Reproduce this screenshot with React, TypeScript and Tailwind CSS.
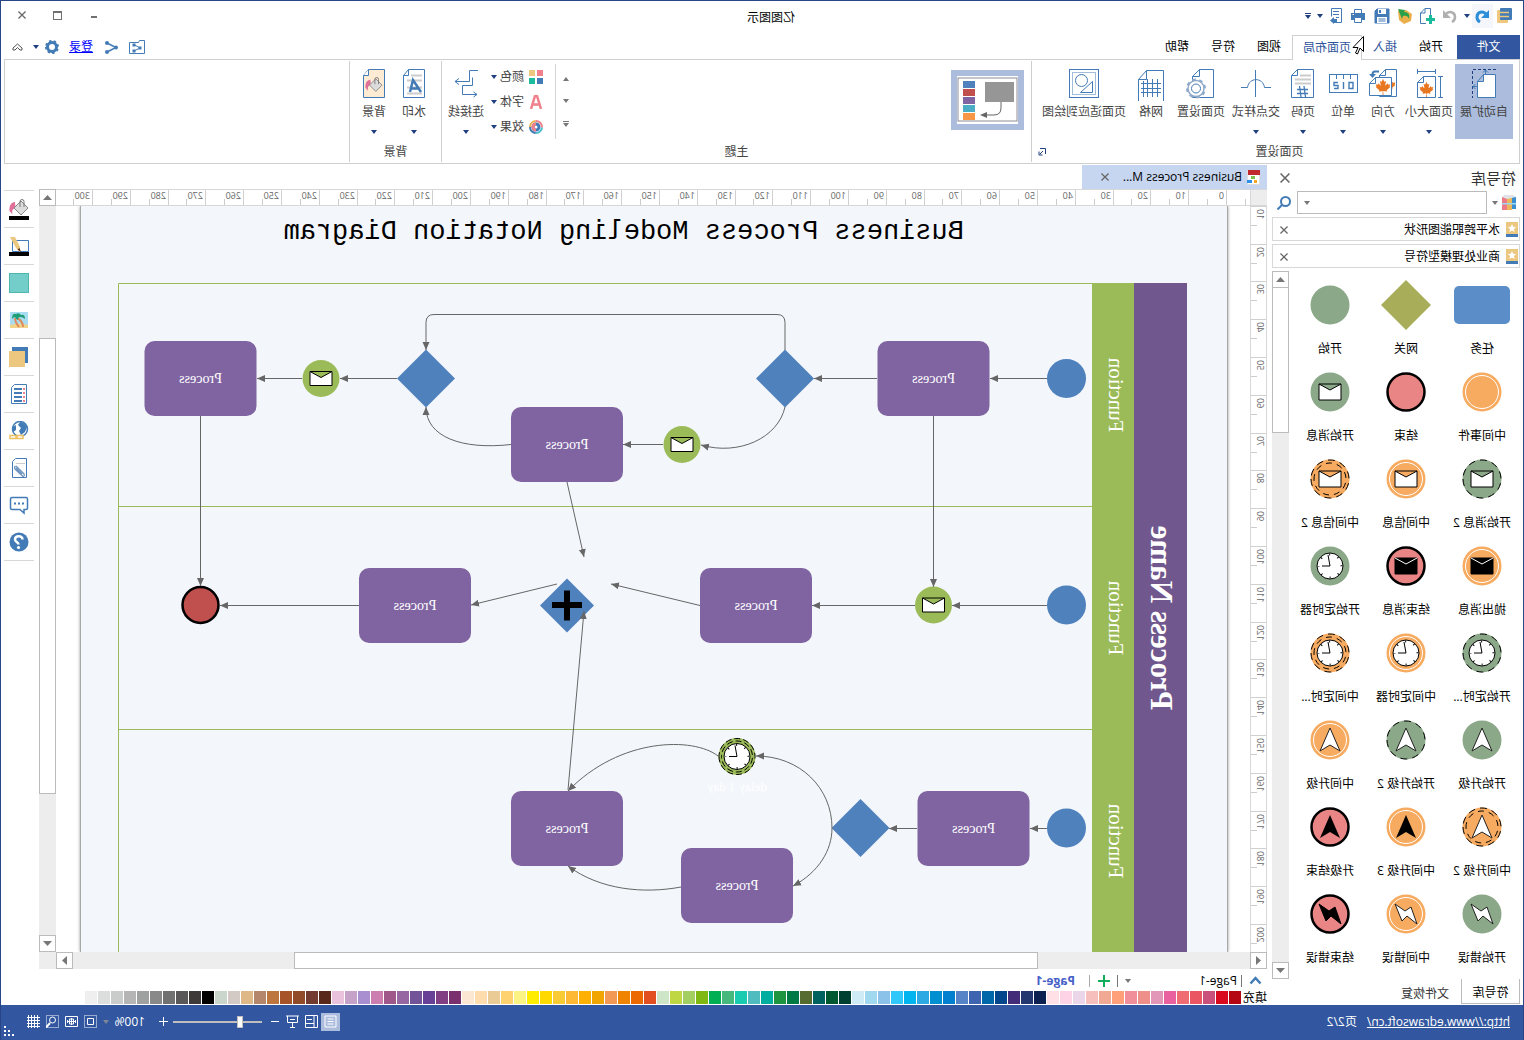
import type { ReactNode } from 'react';
import { FaCanadianMapleLeaf } from 'react-icons/fa';

const symbols: { label: string; ring: string; glyph?: string }[] = [
  { label: '任务', ring: 'task' },
  { label: '网关', ring: 'gateway' },
  { label: '开始', ring: 'start' },
  { label: '中间事件', ring: 'middle' },
  { label: '结束', ring: 'end' },
  { label: '开始消息', ring: 'start', glyph: 'mail' },
  { label: '开始消息 2', ring: 'start2', glyph: 'mail' },
  { label: '中间信息', ring: 'middle', glyph: 'mail' },
  { label: '中间信息 2', ring: 'middle2', glyph: 'mail' },
  { label: '抛出消息', ring: 'middle', glyph: 'mailDark' },
  { label: '结束消息', ring: 'end', glyph: 'mailDark' },
  { label: '开始定时器', ring: 'start', glyph: 'clock' },
  { label: '开始定时...', ring: 'start2', glyph: 'clock' },
  { label: '中间定时器', ring: 'middle', glyph: 'clock' },
  { label: '中间定时...', ring: 'middle2', glyph: 'clock' },
  { label: '开始升级', ring: 'start', glyph: 'up' },
  { label: '开始升级 2', ring: 'start2', glyph: 'up' },
  { label: '中间升级', ring: 'middle', glyph: 'up' },
  { label: '中间升级 2', ring: 'middle2', glyph: 'up' },
  { label: '中间升级 3', ring: 'middle', glyph: 'upDark' },
  { label: '升级结束', ring: 'end', glyph: 'upDark' },
  { label: '开始错误', ring: 'start', glyph: 'bolt' },
  { label: '中间错误', ring: 'middle', glyph: 'bolt' },
  { label: '结束错误', ring: 'end', glyph: 'boltDark' },
];

const palette = [
  '#b50614', '#d90a1e', '#c9507b', '#ea5662', '#ee6c72', '#e9619f', '#e296b8', '#ef8f8a', '#f08f99', '#ffa07a',
  '#f2a994', '#f6bfbb', '#ead5e9', '#ffd3e6', '#ffe0e6', '#0d2150', '#22386f', '#432d78', '#04468b', '#0068a8',
  '#3e63b0', '#5684c6', '#0080cf', '#008fd0', '#2ca8e2', '#00b4f0', '#30c8fb', '#8ac2ea', '#a0d8ef', '#cfebf5',
  '#004030', '#005830', '#00625e', '#556b2f', '#007a45', '#1f9440', '#00ae9f', '#50bcc0', '#1acbb1', '#48b97c',
  '#00ae54', '#80b813', '#a3cf62', '#bed742', '#cde6c7', '#e24f20', '#ec6800', '#f08300', '#f29a55', '#f0a500',
  '#ffb000', '#fdb933', '#f8ca33', '#ffd900', '#ffec00', '#fbf384', '#fed26e', '#eacb96', '#fedcae', '#fce8d2',
  '#7a306e', '#823e83', '#684096', '#735499', '#9667a0', '#9f5889', '#cc7eb1', '#a98fcf', '#c6a2c8', '#eac2dc',
  '#58281a', '#733a2f', '#924b29', '#a75428', '#be763f', '#b4866b', '#deb887', '#d3cac5', '#cad5cc', '#000000',
  '#3e3a39', '#595757', '#727171', '#898989', '#9fa0a0', '#b5b5b6', '#cacccc', '#dcdddd', '#efefef',
];

const BLUE = '#427bb5';
const NAVY = '#1f3f7f';
const ORANGE = '#e87722';

/* ---------- small shared pieces ---------- */

function Caret({ color = NAVY, up = false }: { color?: string; up?: boolean }) {
  return (
    <svg width="6" height="4" viewBox="0 0 6 4" className="shrink-0">
      <path d={up ? 'M0 4h6L3 0z' : 'M0 0h6L3 4z'} fill={color} />
    </svg>
  );
}

function Cross({ size = 9 }: { size?: number }) {
  return (
    <svg width={size} height={size} viewBox="0 0 9 9" fill="none" stroke="#666" strokeWidth="1.4">
      <path d="M.5.5l8 8M8.5.5l-8 8" />
    </svg>
  );
}

function Icon({ w = 16, h = 16, children }: { w?: number; h?: number; children: ReactNode }) {
  return (
    <svg width={w} height={h} viewBox={`0 0 ${w} ${h}`} fill="none" stroke={BLUE} className="shrink-0">
      {children}
    </svg>
  );
}

function Bucket() {
  return (
    <>
      <path d="M14 3c4 0 6 4 5.500 9l-3 3.500c1-4-.5-6-3-6.500z" fill="#e0709a" stroke="none" />
      <path d="M1 9l7-7 7 7-7 7z" fill="#dcdcdc" stroke="#888" />
      <path d="M5 8V2.500a2 2 0 0 1 4 0V8" stroke="#777" />
    </>
  );
}

/* ---------- title bar ---------- */

function QuickAccess() {
  const btn = 'flex h-6 items-center justify-center';
  return (
    <div className="flex w-[222px] items-center pb-1 pl-[7px]">
      <button className={`${btn} w-[23px]`} aria-label="Edraw">
        <Icon>
          <rect x="4" y="2" width="11" height="13" rx="1" fill="#efc77e" stroke="none" />
          <rect x="0" y="0" width="12" height="12" rx="1" fill={BLUE} stroke="none" />
          <path d="M3 4.500h9M3 8.500h9" stroke="#efc77e" strokeWidth="1.5" />
        </Icon>
      </button>
      <button className={`${btn} w-[21px] bg-[#f4f6fb]`} aria-label="撤销">
        <Icon w={14} h={14}>
          <path d="M2 6C6 1 12 3 12 8c0 2-1 4-3 5" stroke="#2d8fd8" strokeWidth="3" />
          <path d="M0 1v8h8z" fill="#2d8fd8" stroke="none" />
        </Icon>
      </button>
      <button className={`${btn} w-[10px]`} aria-label="撤销列表"><Caret /></button>
      <button className={`${btn} w-6`} aria-label="重做">
        <Icon w={14} h={14}>
          <path d="M12 6C8 1 2 3 2 8c0 2 1 4 3 5" stroke="#b0b0b0" strokeWidth="2.500" />
          <path d="M14 1v8H6z" fill="#b0b0b0" stroke="none" />
        </Icon>
      </button>
      <button className={`${btn} w-[22px]`} aria-label="新建">
        <Icon>
          <path d="M9 15.500h5.500V5L10 .500H4.500V8M10 .500V5h4.500" />
          <path d="M4.500 7v9M0 11.500h9" stroke="#1abc9c" strokeWidth="3" />
        </Icon>
      </button>
      <button className={`${btn} w-[22px]`} aria-label="打开">
        <Icon>
          <path d="M1 6l6-4 8 1-1 9-5 4-7-3z" fill="#e9b04c" stroke="none" />
          <path d="M15 1L8 2l1 2c-4 0-6 2-5 7 1-3 3-4 6-3l1 3z" fill="#2aa04a" stroke="none" />
        </Icon>
      </button>
      <button className={`${btn} w-6`} aria-label="保存">
        <Icon>
          <path d="M1 1h12l2 2v12H1z" fill={BLUE} />
          <path d="M4 1v5h8V1zM3 9h10v6H3z" fill="#fff" stroke="none" />
          <path d="M4.500 11h7M4.500 13h7" />
          <path d="M9 2h2v3H9z" fill={BLUE} stroke="none" />
        </Icon>
      </button>
      <button className={`${btn} w-[23px]`} aria-label="打印">
        <Icon>
          <path d="M1 5h14v7H1z" fill={BLUE} stroke="none" />
          <path d="M4.500 5V1.500h7V5M4.500 9.500h7v5h-7z" fill="#fff" />
          <path d="M12 6.500h1.500" stroke="#fff" />
        </Icon>
      </button>
      <button className={`${btn} w-[22px]`} aria-label="导出">
        <Icon w={12} h={16}>
          <path d="M8 14.500H.5V.5h10v8M3 3.500h6M3 6.500h6M3 9.500h3" />
          <path d="M5 11h3V9l4 3.500L8 16v-2H5z" fill={BLUE} stroke="none" />
        </Icon>
      </button>
      <button className={`${btn} w-[10px]`} aria-label="更多导出"><Caret /></button>
      <button className={`${btn} w-[14px] flex-col gap-px`} aria-label="自定义">
        <span className="h-px w-1.5 bg-[#1f3f7f]" />
        <Caret />
      </button>
    </div>
  );
}

function TitleBar() {
  return (
    <header className="flex h-[34px] shrink-0 items-center">
      <QuickAccess />
      <h1 className="flex-1 text-center text-black">亿图图示</h1>
      <div className="flex w-[240px] justify-end pb-1.5 pr-[3px] text-[#666]">
        <button className="flex h-7 w-9 items-center justify-center" aria-label="最小化">
          <span className="mt-1 h-0.5 w-1.5 bg-[#707070]" />
        </button>
        <button className="flex h-7 w-9 items-center justify-center" aria-label="最大化">
          <span className="h-[9px] w-[9px] border border-t-2 border-[#707070]" />
        </button>
        <button className="flex h-7 w-9 items-center justify-center" aria-label="关闭"><Cross size={8} /></button>
      </div>
    </header>
  );
}

function TabRow() {
  const tab = 'h-6 px-[11px] text-black';
  return (
    <nav className="relative flex h-6 shrink-0 items-center px-[3px]">
      <button className="mr-[3px] h-6 w-[63px] bg-[#3257a0] text-white">文件</button>
      <button className={tab}>开始</button>
      <button className="h-6 px-[11px] text-[#2f549b]">插入</button>
      <button className="relative z-10 -mb-px h-[25px] border border-b-0 border-[#cfcfcf] bg-white px-[10px] text-[#2f549b]">页面布局</button>
      <button className={tab}>视图</button>
      <button className={tab}>符号</button>
      <button className={tab}>帮助</button>
      <div className="ml-auto flex items-center pr-2">
        <button className="mr-2.5" aria-label="分享文件夹">
          <Icon w={17} h={15}>
            <path d="M.5 13.500V.5h5l1 2h9v11z" />
            <path d="M11 4.500L5 8l6 3" />
            <path d="M9.500 3.500h3v3h-3zM3.500 6.500h3v3h-3zM9.500 9.500h3v3h-3z" fill={BLUE} stroke="none" />
          </Icon>
        </button>
        <button className="mr-3" aria-label="分享">
          <Icon w={13} h={13}>
            <path d="M11 2L2 6.500l9 4.500" strokeWidth="1.500" />
            <circle cx="11" cy="2" r="2" fill={BLUE} stroke="none" />
            <circle cx="2" cy="6.500" r="2" fill={BLUE} stroke="none" />
            <circle cx="11" cy="11" r="2" fill={BLUE} stroke="none" />
          </Icon>
        </button>
        <a href="#login" className="mr-2.5 text-[#0000ff] underline">登录</a>
        <button className="mr-1.5" aria-label="设置">
          <Icon w={14} h={14}>
            <circle cx="7" cy="7" r="4.500" strokeWidth="3" />
            <circle cx="7" cy="7" r="6" strokeWidth="2" strokeDasharray="2.350 2.350" />
          </Icon>
        </button>
        <button className="mr-2.5" aria-label="设置菜单"><Caret /></button>
        <button aria-label="折叠功能区">
          <Icon w={11} h={9}>
            <path d="M1 5l4.500-4L10 5v2H8L5.500 4.500 3 7H1z" stroke="#555" />
          </Icon>
        </button>
      </div>
      {/* mouse pointer */}
      <svg width="13" height="20" viewBox="0 0 13 20" className="absolute left-[159px] top-px z-20">
        <path d="M.5.500v15l3.500-3.500 2.500 6 2-1-2.500-5.500h5z" fill="#fff" stroke="#000" />
      </svg>
    </nav>
  );
}

/* ---------- ribbon ---------- */

function RibbonButton({ label, width, icon, menu = false, active = false }: {
  label: string; width: string; icon: ReactNode; menu?: boolean; active?: boolean;
}) {
  return (
    <button className={`flex h-[75px] shrink-0 flex-col items-center pt-[5px] whitespace-nowrap text-[#444] ${width} ${active ? 'bg-[#abbcdd]' : ''}`}>
      <Icon w={30} h={32}>{icon}</Icon>
      <span className="mt-[3px] leading-4">{label}</span>
      {menu && <span className="mt-2.5"><Caret /></span>}
    </button>
  );
}

function RibbonGroup({ label, className = '', launcher = false, children }: {
  label: string; className?: string; launcher?: boolean; children: ReactNode;
}) {
  return (
    <section className={`my-px flex flex-col border-r border-[#cfcfcf] pt-[3px] ${className}`}>
      <div className="flex flex-1">{children}</div>
      <div className="flex h-[21px] items-center">
        <span className="flex-1 text-center text-[#444]">{label}</span>
        {launcher && (
          <button className="mr-1.5" aria-label="更多设置">
            <Icon w={8} h={8}>
              <path d="M.5 6V.5H6M3 3l3 3M7 3.500V7H3.500" stroke={NAVY} />
            </Icon>
          </button>
        )}
      </div>
    </section>
  );
}

const pageSetup = [
  {
    label: '自动扩展', width: 'w-[58px]', active: true,
    icon: (
      <>
        <path d="M3.500 5.500h12l6 7v16h-18zM15.500 5.500v7h6" fill="#fff" />
        <path d="M3 .5h23.500V29" strokeDasharray="3 2" stroke={NAVY} />
        <path d="M13.500 6V1M11 3.500L13.500 1 16 3.500M21 17.500h5M23.500 15l2.500 2.500-2.500 2.500" />
      </>
    ),
  },
  {
    label: '页面大小', width: 'w-[52px]', menu: true,
    icon: (
      <>
        <path d="M8.500 7.500h12l6 6v15h-18zM20.500 7.500v6h6M8.500 2.500h18M8.500 0v5M26.500 0v5M3.500 7.500v21M1 7.500h5M1 28.500h5" />
        <FaCanadianMapleLeaf x="10" y="13" size={15} color={ORANGE} />
      </>
    ),
  },
  {
    label: '方向', width: 'w-10', menu: true,
    icon: (
      <>
        <path d="M1.500.500h11l6 6v21h-17zM12.500.500v6h6" />
        <FaCanadianMapleLeaf x="2" y="9" size={14} color={ORANGE} />
        <path d="M6.500 8.500h16l6 6v12h-22z" fill="#fff" />
        <path d="M22.500 8.500v6h6" />
        <FaCanadianMapleLeaf x="7" y="10" size={16} color={ORANGE} />
        <path d="M19 2.500h4q2.500 0 2.500 3" strokeWidth="2" />
        <path d="M22 5h7l-3.500 4z" fill={BLUE} stroke="none" />
      </>
    ),
  },
  {
    label: '单位', width: 'w-10', menu: true,
    icon: (
      <>
        <rect x=".5" y="5.500" width="28" height="18" />
        <path d="M7.500 6v4M14.500 6v4M21.500 6v4" />
        <path d="M5 13.500h4v6H5zM14.500 13v7M20 13.500h4v3h-4v3h4" strokeWidth="1.400" />
      </>
    ),
  },
  {
    label: '页码', width: 'w-10', menu: true,
    icon: (
      <>
        <path d="M4.500.500h16l6 6v22h-22zM20.500.500v6h6" />
        <path d="M7 6.500h11M7 10.500h16M7 14.500h16" stroke="#ccc" strokeWidth="2" />
        <path d="M10 20.500h11M10 24.500h11M14 17l-1.500 11M18.500 17l-1.500 11" strokeWidth="1.300" />
      </>
    ),
  },
  {
    label: '交点样式', width: 'w-[54px]', menu: true,
    icon: <path d="M0 18.500h6.500C8 8 22 8 23.500 18.500H31M15.500 1v27" />,
  },
  {
    label: '页面设置', width: 'w-[56px]',
    icon: (
      <>
        <path d="M2.500.500h14l7 7v21h-21zM16.500.500v7h7" />
        <circle cx="20" cy="19.500" r="8" fill="#fff" stroke="#8fa9c8" strokeWidth="1.500" />
        <circle cx="20" cy="19.500" r="9" stroke="#8fa9c8" strokeWidth="2" strokeDasharray="3.530 3.530" />
        <circle cx="20" cy="19.500" r="4.500" fill="#fff" />
      </>
    ),
  },
  {
    label: '网格', width: 'w-11',
    icon: (
      <>
        <path d="M2.500 1.500h17l8 9v24h-25zM19.500 1.500v9h8" />
        <path d="M5 14.500h20M5 19.500h20M5 23.500h20M8.500 10v18M13.500 10v18M18.500 10v18M22.500 12v16" />
      </>
    ),
  },
  {
    label: '页面适应到绘图', width: 'w-[90px]',
    icon: (
      <>
        <rect x=".500" y=".500" width="29" height="28" />
        <rect x="3.500" y="3.500" width="23" height="22" strokeDasharray="1 1" />
        <circle cx="17.500" cy="11.500" r="6" />
        <path d="M6.500 12.500v11h12z" />
      </>
    ),
  },
];

function Ribbon() {
  const small = 'flex h-[25px] items-center text-[#444]';
  return (
    <div className="mx-[3px] flex h-[105px] shrink-0 border border-[#cfcfcf]">
      <RibbonGroup label="页面设置" className="pl-1.5" launcher>
        {pageSetup.map((b) => <RibbonButton key={b.label} {...b} />)}
        <span className="w-[7px]" />
      </RibbonGroup>

      <RibbonGroup label="主题" className="w-[590px]">
        <button className="ml-[7px] mt-1.5 h-[60px] w-[73px] bg-[#abbcdd] p-1.5" aria-label="主题样式">
          <svg width="61" height="48" viewBox="0 0 61 48" className="bg-white">
            <rect x="1" y="2" width="59" height="43" fill="#fff" stroke="#8c8c94" />
            <rect x="4" y="6" width="29" height="20" fill="#969696" />
            <path d="M17 26v6q0 7 7 7h8" fill="none" stroke="#666" />
            <path d="M31 36l7 3-7 3z" fill="#666" />
            <path d="M43 5h12v7H43z" fill="#4f81bd" />
            <path d="M43 13h12v7H43z" fill="#c0504d" />
            <path d="M43 21h12v7H43z" fill="#8064a2" />
            <path d="M43 29h12v7H43z" fill="#4bacc6" />
            <path d="M43 37h12v7H43z" fill="#f79646" />
          </svg>
        </button>
        <div className="ml-auto flex h-[75px] w-[21px] flex-col items-center gap-[18px] border-r border-[#d5d5d5] pt-[13px]">
          <button aria-label="上一行"><Caret up color="#777" /></button>
          <button aria-label="下一行"><Caret color="#777" /></button>
          <button className="flex flex-col gap-px" aria-label="展开">
            <span className="h-px w-1.5 bg-[#777]" />
            <Caret color="#777" />
          </button>
        </div>
        <div className="ml-3 flex w-[55px] flex-col">
          <button className={small}>
            <Icon w={14} h={14}>
              <g stroke="none">
                <path d="M0 0h6v6H0z" fill="#f0808c" />
                <path d="M8 0h6v6H8z" fill="#ecc77f" />
                <path d="M0 8h6v6H0z" fill={BLUE} />
                <path d="M8 8h6v6H8z" fill="#1abc9c" />
              </g>
            </Icon>
            <span className="ml-[5px] mr-[3px]">颜色</span>
            <Caret />
          </button>
          <button className={small}>
            <Icon w={14} h={14}>
              <path d="M2 14L6 1h2l4 13M4 9.500h6" stroke="#f0808c" strokeWidth="2.500" />
            </Icon>
            <span className="ml-[5px] mr-[3px]">字体</span>
            <Caret />
          </button>
          <button className={small}>
            <Icon w={14} h={14}>
              <circle cx="7" cy="7" r="6" stroke={BLUE} strokeWidth="2" strokeDasharray="9 28.700" />
              <circle cx="7" cy="7" r="6" stroke="#4bc0d0" strokeWidth="2" strokeDasharray="9 28.700" strokeDashoffset="-9" />
              <circle cx="7" cy="7" r="6" stroke="#f0808c" strokeWidth="2" strokeDasharray="10 27.700" strokeDashoffset="-18" />
              <circle cx="7" cy="7" r="6" stroke="#ecb04f" strokeWidth="2" strokeDasharray="9.700 28" strokeDashoffset="-28" />
              <circle cx="7" cy="7" r="3" strokeWidth="3" />
              <path d="M7 4a3 3 0 0 1 0 6" stroke="#f0808c" strokeWidth="3" />
            </Icon>
            <span className="ml-[5px] mr-[3px]">效果</span>
            <Caret />
          </button>
        </div>
        <RibbonButton
          label="连接线" width="w-11" menu
          icon={<path d="M4 1.500h8.500v11H27M23 9.500l4 3-4 3M9.500 8.500v8h10v9H5M8.500 23L5 25.500 8.500 28" transform="matrix(1 0 0 1 -1 0)" />}
        />
        <span className="w-0.5" />
      </RibbonGroup>

      <RibbonGroup label="背景" className="w-[92px]">
        <span className="w-[7px]" />
        <RibbonButton
          label="水印" width="w-10" menu
          icon={
            <>
              <path d="M4.500.500h16l5 6v22h-21zM20.500.500v6h5" />
              <path d="M7 6.500h11M7 11.500h15M7 18.500h15M7 24.500h15" stroke="#ccc" strokeWidth="2" />
              <path d="M8 23l8-12 3 12M11 19.500h8" strokeWidth="2.500" />
            </>
          }
        />
        <RibbonButton
          label="背景" width="w-10" menu
          icon={
            <>
              <path d="M4.500.500h16l5 6v22h-21z" fill="#fdebd3" />
              <path d="M20.500.500v6h5" fill="#fff" />
              <g transform="translate(6 8) scale(.9)"><Bucket /></g>
            </>
          }
        />
      </RibbonGroup>
    </div>
  );
}

/* ---------- symbols ---------- */

const GLYPH_UP = 'M0-12L10 11 0 5-10 11z';
const GLYPH_BOLT = 'M11-10L1-3-5-7-11 10-1 2 4 7z';

function Glyph({ name }: { name?: string }) {
  switch (name) {
    case 'mail':
      return <path d="M-11-8h22V8h-22zM-11-8L0-2 11-8" fill="#fff" stroke="#000" />;
    case 'mailDark':
      return (
        <>
          <path d="M-11-8h22V8h-22z" fill="#000" stroke="#000" />
          <path d="M-11-8L0-2 11-8" fill="none" stroke="#fff" />
        </>
      );
    case 'clock':
      return (
        <>
          <circle r="13" fill="#fff" stroke="#000" />
          <circle r="11.500" fill="none" stroke="#000" strokeWidth="2" strokeDasharray="1 8.030" strokeDashoffset=".5" />
          <path d="M2-11L0 0h8" fill="none" stroke="#000" />
        </>
      );
    case 'up':
      return <path d={GLYPH_UP} fill="#fff" stroke="#222" />;
    case 'upDark':
      return <path d={GLYPH_UP} fill="#000" />;
    case 'bolt':
      return <path d={GLYPH_BOLT} fill="#fff" stroke="#222" />;
    case 'boltDark':
      return <path d={GLYPH_BOLT} fill="#000" stroke="#000" />;
    default:
      return null;
  }
}

function SymbolShape({ ring, glyph }: { ring: string; glyph?: string }) {
  return (
    <svg width="58" height="50" viewBox="-29 -25 58 50">
      {ring === 'task' && <rect x="-28" y="-19" width="56" height="38" rx="5" fill="#5b8ec8" />}
      {ring === 'gateway' && <path d="M0-25L25 0 0 25-25 0z" fill="#a8ad5a" />}
      {ring.startsWith('start') && <circle r="19.500" fill="#8ba888" />}
      {ring.startsWith('middle') && <circle r="19.500" fill="#f7ab60" />}
      {ring === 'middle' && <circle r="16.500" fill="none" stroke="#fff" />}
      {ring === 'end' && <circle r="18.500" fill="#e98584" stroke="#000" strokeWidth="2.500" />}
      {ring.endsWith('2') && <circle r="19" fill="none" stroke="#000" strokeDasharray="7 5" />}
      {ring === 'middle2' && <circle r="16" fill="none" stroke="#000" strokeDasharray="6 5" strokeDashoffset="4" />}
      <Glyph name={glyph} />
    </svg>
  );
}

function ScrollButton({ dir }: { dir: 'up' | 'down' | 'left' | 'right' }) {
  const d = { up: 'M0 7h9L4.500 2z', down: 'M0 2h9L4.500 7z', left: 'M7 0v9L2 4.500z', right: 'M2 0v9l5-4.500z' }[dir];
  return (
    <button className="flex h-[17px] w-[17px] shrink-0 items-center justify-center border border-[#bbb] bg-white" aria-label={dir}>
      <svg width="9" height="9" viewBox="0 0 9 9"><path d={d} fill="#777" /></svg>
    </button>
  );
}

function LibraryRow({ name }: { name: string }) {
  return (
    <div className="mb-[3px] flex h-6 items-center border border-[#d8d8d8] pl-px pr-[7px] pt-px text-black">
      <Icon w={12} h={15}>
        <path d="M0 0h12v12H0z" fill="#ecc77f" stroke="none" />
        <path d="M0 12h12v3H0z" fill={BLUE} stroke="none" />
        <path d="M6 2l1.200 2.800 3 .2-2.300 2 .8 3L6 8.400 3.300 10l.8-3-2.300-2 3-.2z" fill="#fff" stroke="none" />
      </Icon>
      <span className="ml-1.5 flex-1">{name}</span>
      <button aria-label={`关闭 ${name}`}><Cross size={8} /></button>
    </div>
  );
}

function SymbolPanel() {
  return (
    <aside className="ml-[3px] mr-[5px] flex w-[248px] shrink-0 flex-col">
      <div className="flex h-[27px] items-center justify-between pl-1 pr-2">
        <h2 className="text-[15px] text-[#333]">符号库</h2>
        <button aria-label="关闭符号库"><Cross size={10} /></button>
      </div>
      <div className="mb-[3px] flex h-[23px] items-center pl-1">
        <Icon w={14} h={16}>
          <g stroke="none">
            <path d="M0 2h4v12H0z" fill="#3a8fd0" />
            <path d="M4 3h5v12H4z" fill="#ecb85c" />
            <path d="M9 2h5v13H9z" fill="#ee7a88" />
            <path d="M0 2l3-2h9l2 2-5 2z" fill="#dfe3e8" />
            <path d="M0 8h14v1.500H0z" fill="#9fd8f0" />
          </g>
        </Icon>
        <span className="ml-1 mr-[5px]"><Caret color="#777" /></span>
        <label className="relative flex h-[23px] w-[190px] items-center border border-[#bbb]">
          <input type="text" aria-label="搜索" className="h-full w-full px-1 outline-none" />
          <span className="absolute right-1.5"><Caret color="#777" /></span>
        </label>
        <button className="ml-1.5" aria-label="搜索符号">
          <Icon w={14} h={14}>
            <circle cx="5.500" cy="5.500" r="4.500" strokeWidth="2" />
            <path d="M9 9l4.500 4.500" strokeWidth="2" />
          </Icon>
        </button>
      </div>
      <LibraryRow name="水平跨职能图形状" />
      <LibraryRow name="商业处理模型符号" />
      <div className="flex min-h-0 flex-1">
        <ul className="grid flex-1 auto-rows-[87px] grid-cols-[repeat(3,76px)] overflow-hidden pt-[9px] text-black">
          {symbols.map((s) => (
            <li key={s.label} className="flex flex-col items-center">
              <SymbolShape ring={s.ring} glyph={s.glyph} />
              <span className="mt-[11px] whitespace-nowrap leading-4">{s.label}</span>
            </li>
          ))}
        </ul>
        <div className="flex w-[17px] flex-col bg-[#ededed]">
          <ScrollButton dir="up" />
          <div className="-mt-px h-[146px] border border-[#bbb] bg-white" />
          <div className="flex-1" />
          <ScrollButton dir="down" />
        </div>
      </div>
      <div className="flex h-[26px] pb-px text-[#333]">
        <button className="w-[59px] border border-t-0 border-[#bbb] pt-1 text-black">符号库</button>
        <button className="ml-2.5 w-[52px] pt-1">文件恢复</button>
      </div>
    </aside>
  );
}

/* ---------- drawing page ---------- */

function Process({ x, y }: { x: number; y: number }) {
  return (
    <g>
      <rect x={x} y={y} width="112" height="75" rx="10" fill="#8064a2" />
      <text x={x + 56} y={y + 42} textAnchor="middle" fontSize="14" fill="#fff">Process</text>
    </g>
  );
}

function Diamond({ x, y, r = 29 }: { x: number; y: number; r?: number }) {
  return <path d={`M${x} ${y - r}l${r} ${r}-${r} ${r}-${r}-${r}z`} fill="#4f81bd" />;
}

function Message({ x, y }: { x: number; y: number }) {
  return (
    <g transform={`translate(${x} ${y})`}>
      <circle r="18.500" fill="#9bbb59" />
      <path d="M-11-7h22V7h-22zM-11-7L0-1 11-7" fill="#fff" stroke="#000" />
    </g>
  );
}

// connectors, in window coordinates
const connectors = [
  'M477 378.500H534',
  'M647 378.500H710',
  'M739 350V322.500Q739 314.500 747 314.500H1090Q1098 314.500 1098 322.500V350',
  'M739 407C746 438 785 456 823 445',
  'M861 444.500H901',
  'M1013 444.500C1062 450 1098 437 1098 407',
  'M1127 378.500H1184',
  'M1222 378.500H1267',
  'M590.500 416V587',
  'M1323.500 416V586',
  'M957 482L940 557',
  'M477 605.500H572',
  'M609 605.500H712',
  'M824 605.500L913 584',
  'M967 584L1053 605',
  'M1165 605.500H1304',
  'M956 790L940 611',
  'M477 828.500H494',
  'M607 828.500H635',
  'M692 828C692 788 724 756 768 756',
  'M692 828C692 850 705 872 731 886',
  'M806 756C830 737 904 737 956 791',
  'M843 887C880 894 924 890 956 866',
];

function DrawingPage() {
  return (
    <div className="ml-[22px] w-[1148px] border-x border-[#a8a8a8] bg-[#f3f6fb] shadow-[0_0_3px_#999]">
      <svg width="1146" height="746" viewBox="297 206 1146 746" className="block font-['Liberation_Serif',serif]">
        <defs>
          <marker id="arrow" viewBox="0 0 8 8" refX="8" refY="4" markerWidth="8" markerHeight="8" orient="auto">
            <path d="M0 .500L8 4 0 7.500z" fill="#666" />
          </marker>
        </defs>
        <text x="560" y="239" fontSize="27" className="font-['Liberation_Mono',monospace]">
          Business Process Modeling Notation Diagram
        </text>

        <rect x="337" y="283" width="53" height="669" fill="#70588e" />
        <rect x="390" y="283" width="42" height="669" fill="#9bbb59" />
        <path d="M432 283.500H1405.500V952M432 506.500H1405.500M432 729.500H1405.500" fill="none" stroke="#9bbb59" />
        <text transform="translate(373 618) rotate(-90)" textAnchor="middle" fontSize="31" fontWeight="bold" fill="#fff">
          Process Name
        </text>
        {[395, 618, 841].map((y) => (
          <text key={y} transform={`translate(415 ${y}) rotate(-90)`} textAnchor="middle" fontSize="21" fill="#fff">
            Function
          </text>
        ))}

        {[378.5, 605, 828].map((y) => <circle key={y} cx="457.500" cy={y} r="19.500" fill="#4f81bd" />)}
        <Process x={534.5} y={341} />
        <Process x={901} y={407} />
        <Process x={1267.5} y={341} />
        <Process x={712} y={568} />
        <Process x={1053} y={568} />
        <Process x={494.5} y={791} />
        <Process x={731} y={848} />
        <Process x={901} y={791} />
        <Diamond x={739} y={378.5} />
        <Diamond x={1098} y={378.5} />
        <Diamond x={957} y={605.5} r={27} />
        <path d="M957 590.500v30M942 605h30" stroke="#000" strokeWidth="6" />
        <Diamond x={663.5} y={828} />
        <Message x={842} y={444.5} />
        <Message x={1203} y={378.5} />
        <Message x={590.5} y={605} />
        <circle cx="1323.500" cy="605" r="18" fill="#c0504d" stroke="#000" strokeWidth="2.500" />
        <g transform="translate(787 756.500)">
          <circle r="18.500" fill="#9bbb59" />
          <circle r="18" fill="none" stroke="#000" strokeDasharray="6 3" />
          <circle r="15.500" fill="none" stroke="#000" strokeDasharray="6 3" strokeDashoffset="4" />
          <Glyph name="clock" />
        </g>
        <text x="787" y="791" textAnchor="middle" fontSize="13" fill="#fff">delay 1 day</text>

        {connectors.map((d) => <path key={d} d={d} fill="none" stroke="#666" markerEnd="url(#arrow)" />)}
      </svg>
    </div>
  );
}

const hMarks = Array.from({ length: 31 }, (_, i) => i * 10);
const vMarks = Array.from({ length: 20 }, (_, i) => (i + 1) * 10);

function Workspace() {
  return (
    <main className="flex min-w-0 flex-1 flex-col">
      <div className="flex h-[25px] pt-px">
        <div className="flex w-[185px] items-center bg-[#c6d6f0] pl-[7px] pr-[19px] text-black">
          <Icon w={14} h={15}>
            <rect x=".5" y=".5" width="12" height="14" fill="#fff" stroke="#ddd" />
            <path d="M0 0h12v5H0z" fill="#c0282d" stroke="none" />
            <path d="M3 10h3v3H3z" fill="#f5a623" stroke="none" />
            <path d="M5 6h4v3H5z" fill="#7cc04b" stroke="none" />
            <path d="M8 10h5v3H8z" fill="#2d8fe8" stroke="none" />
          </Icon>
          <span className="ml-1 flex-1 whitespace-nowrap">Business Process M...</span>
          <button aria-label="关闭文档"><Cross size={8} /></button>
        </div>
      </div>

      <div className="flex min-h-0 flex-1">
        <div className="flex min-w-0 flex-1 flex-col">
          {/* horizontal ruler: 10 units are 37.8px */}
          <div className="flex h-[17px] shrink-0 border-y border-[#d8d8d8] text-[9px] leading-3 text-[#666]">
            <div className="w-[17px] shrink-0 border-r border-[#d8d8d8] bg-[#ededed]" />
            <div className="relative flex-1 overflow-hidden">
              <span className="absolute bottom-0 left-1 h-1.5 w-px bg-[#ccc]" />
              {hMarks.map((n) => (
                <div key={n} className="absolute inset-y-0 border-l border-[#d0d0d0] pl-0.5" style={{ left: Math.round(23 + n * 3.78) }}>
                  {n}
                  <span className="absolute bottom-0 left-[18px] h-1.5 w-px bg-[#ccc]" />
                </div>
              ))}
            </div>
          </div>
          <div className="flex min-h-0 flex-1">
            <div className="relative w-[17px] shrink-0 overflow-hidden border-x border-[#d8d8d8] text-[9px] text-[#666]">
              {vMarks.map((n) => (
                <div key={n} className="absolute inset-x-0 flex border-t border-[#d0d0d0] pt-0.5" style={{ top: Math.round(n * 3.78 - 38) }}>
                  <span className="rotate-180 leading-3 [writing-mode:vertical-rl]">{n}</span>
                  <span className="absolute right-0 top-[18px] h-px w-1.5 bg-[#ccc]" />
                </div>
              ))}
            </div>
            <div className="flex-1 overflow-hidden bg-white">
              <DrawingPage />
            </div>
          </div>
        </div>
        <div className="flex w-[17px] flex-col bg-[#ededed]">
          <ScrollButton dir="up" />
          <div className="h-[132px]" />
          <div className="h-[456px] border border-[#bbb] bg-white" />
          <div className="flex-1" />
          <ScrollButton dir="down" />
        </div>
      </div>

      <div className="flex h-[17px] shrink-0 bg-[#ededed]">
        <ScrollButton dir="left" />
        <div className="w-[212px]" />
        <div className="w-[744px] border border-[#bbb] bg-white" />
        <div className="flex-1" />
        <ScrollButton dir="right" />
        <div className="w-[17px]" />
      </div>

      <div className="flex h-[22px] shrink-0 items-center pl-[5px] pt-px text-black">
        <Icon w={13} h={9}>
          <path d="M1.500 7.500l5-5.500 5 5.500" strokeWidth="2.500" />
        </Icon>
        <span className="ml-[7px] mr-1 h-3 w-px bg-[#777]" />
        <button className="w-[106px] text-left">Page-1</button>
        <Caret color="#777" />
        <span className="mx-[7px] h-3 w-px bg-[#777]" />
        <button aria-label="添加页面">
          <Icon w={12} h={12}><path d="M6 0v12M0 6h12" stroke="#0eae5a" strokeWidth="2" /></Icon>
        </button>
        <span className="ml-2 mr-3.5 h-3 w-px bg-[#aaa]" />
        <button className="font-bold text-[#4660c8]">Page-1</button>
      </div>

      <div className="flex h-[14px] shrink-0 gap-px">
        <span className="mr-px w-6 shrink-0 whitespace-nowrap leading-[14px] text-black">填充</span>
        {palette.map((c) => (
          <button key={c} className="h-[13px] w-3 shrink-0" style={{ background: c }} aria-label={c} />
        ))}
      </div>
    </main>
  );
}

/* ---------- right tool strip ---------- */

const tools: { name: string; icon: ReactNode }[] = [
  {
    name: '填充',
    icon: (
      <>
        <Bucket />
        <path d="M0 17h20v4H0z" fill="#000" stroke="none" />
      </>
    ),
  },
  {
    name: '线条',
    icon: (
      <>
        <path d="M.5 4.500h16v11H.5z" />
        <path d="M14 1h5l-6 11-4 4 0-5z" fill="#ecc77f" stroke="none" />
        <path d="M8 16l1.500-4 2 1.500z" fill="#5a2a1a" stroke="none" />
        <path d="M0 16h20v4H0z" fill="#000" stroke="none" />
      </>
    ),
  },
  { name: '形状', icon: <rect x=".5" y=".5" width="19" height="19" fill="#73cdc8" stroke="#4fb5b0" /> },
  {
    name: '图片',
    icon: (
      <>
        <path d="M1 2h18v16H1z" fill="#a8dcf0" stroke="none" />
        <path d="M1 15q9-3 18 0v3H1z" fill="#f2d38c" stroke="none" />
        <path d="M12 8q-6 3-6 9M14 8q0 4-4 9" stroke="#e08a5f" strokeWidth="2" />
        <path d="M4 9q0-5 4-4 2-3 5-1 4-1 4 5-2-2-3-2-1 3-3 3 0-3-2-3-3 0-5 2z" fill="#1f9f78" stroke="none" />
      </>
    ),
  },
  {
    name: '图层',
    icon: (
      <>
        <path d="M1 0h16v16H1z" fill={BLUE} stroke="none" />
        <path d="M4 4h16v16H4z" fill="#ecc77f" stroke="none" />
      </>
    ),
  },
  {
    name: '属性',
    icon: (
      <>
        <path d="M2.500.500h12l3 3v16h-15z" />
        <path d="M7 5h8M7 9h8M7 13h8M7 17h8" strokeWidth="2" />
        <path d="M4 5h2M4 9h2M4 13h2M4 17h2" stroke="#f0808c" strokeWidth="2" />
      </>
    ),
  },
  {
    name: '超链接',
    icon: (
      <>
        <circle cx="9" cy="8" r="7.500" fill="#fff" strokeWidth="1.500" />
        <path d="M2 6q3-5 7-5l2 3-3 3 2 3-2 4-4-3zM13 4l3 2v5l-3-2z" fill={BLUE} stroke="none" />
        <path d="M6 14.500h6v3H6zM13 14.500h6v3h-6z" fill="#fff" stroke="#ecc060" strokeWidth="1.500" />
      </>
    ),
  },
  {
    name: '附件',
    icon: (
      <>
        <path d="M2.500.500h11l3 3v16h-14z" />
        <path d="M4 5.500h9" stroke="#ccc" />
        <path d="M13 8l-8 8q-1 2 1 2.500L14 11q1-2-.5-3M7 16l6-6" stroke="#6f96c0" strokeWidth="1.300" />
      </>
    ),
  },
  {
    name: '批注',
    icon: (
      <>
        <path d="M3 2.500h14q1.500 0 1.500 1.500v9q0 1.500-1.500 1.500H9l-4 3.500v-3.500H3q-1.500 0-1.500-1.500V4q0-1.500 1.500-1.500z" strokeWidth="1.500" />
        <path d="M5 8.500h2M9 8.500h2M13 8.500h2" strokeWidth="2" />
      </>
    ),
  },
  {
    name: '帮助',
    icon: (
      <>
        <circle cx="10" cy="10" r="9.500" fill={BLUE} stroke="none" />
        <path d="M6.500 7.500C6.500 3 14 3.500 14 7.500c0 2.500-3.500 2.500-3.500 5" stroke="#fff" strokeWidth="2.500" />
        <circle cx="10.500" cy="15.500" r="1.600" fill="#fff" stroke="none" />
      </>
    ),
  },
];

function ToolStrip() {
  return (
    <aside className="ml-[5px] mr-[3px] w-[30px] shrink-0 pt-[26px]">
      <div className="border-t border-[#d8d8d8]">
        {tools.map((t) => (
          <button key={t.name} aria-label={t.name} className="flex h-[37px] w-full items-center justify-center border-b border-[#d8d8d8]">
            <Icon w={20} h={21}>{t.icon}</Icon>
          </button>
        ))}
      </div>
    </aside>
  );
}

/* ---------- status bar ---------- */

function StatusIcon({ label, children }: { label: string; children: ReactNode }) {
  return (
    <button aria-label={label} className="flex w-[19px] justify-center">
      <svg width="13" height="13" viewBox="0 0 13 13" fill="none" stroke="#fff">{children}</svg>
    </button>
  );
}

function StatusBar() {
  return (
    <footer className="relative flex h-[35px] shrink-0 items-center bg-[#3257a0] pb-0.5 text-white">
      <a href="http://www.edrawsoft.cn/" className="ml-[13px] underline">http://www.edrawsoft.cn/</a>
      <span className="ml-2.5">页2/2</span>
      <div className="ml-auto flex items-center pr-[23px]">
        <span className="flex h-[18px] items-center bg-[#abbcdd]">
          <StatusIcon label="普通视图"><path d="M1 1h11v11H1zM3.500 4h6M3.500 6.500h6M3.500 9h6" /></StatusIcon>
        </span>
        <StatusIcon label="页面视图"><path d="M.5.5h12v12H.5zM4 .5v12M6 4.500h5M4 8.500h8" /></StatusIcon>
        <StatusIcon label="演示"><path d="M0 1h13M1.500 1v6.500h10V1M6.500 8v4.500M4 12.500h5M4 4.500h5" /></StatusIcon>
        <button aria-label="缩小" className="ml-1 h-px w-2 bg-white" />
        <input
          type="range" aria-label="缩放" min="0" max="100" defaultValue="23"
          className="mx-[9px] h-0.5 w-[89px] appearance-none bg-[#bfbfbf] [&::-webkit-slider-thumb]:h-3 [&::-webkit-slider-thumb]:w-[6px] [&::-webkit-slider-thumb]:appearance-none [&::-webkit-slider-thumb]:border [&::-webkit-slider-thumb]:border-[#bfbfbf] [&::-webkit-slider-thumb]:bg-white"
        />
        <button aria-label="放大" className="-ml-1">
          <svg width="9" height="9" viewBox="0 0 9 9" stroke="#fff"><path d="M4.500 0v9M0 4.500h9" /></svg>
        </button>
        <span className="ml-3.5 w-[33px]">100%</span>
        <span className="mx-[3px]"><Caret color="#7f8794" /></span>
        <StatusIcon label="适合页面">
          <path d="M.5.5h12v12H.5z" strokeDasharray="1 1" />
          <path d="M3.500 3.500h6v6h-6z" />
        </StatusIcon>
        <StatusIcon label="适合宽度"><path d="M.5 1.500h12v10H.5zM4.500 4h4v5h-4zM2 6.500h9M6.500 3v7M2.500 5v3M10.500 5v3" /></StatusIcon>
        <StatusIcon label="局部放大">
          <path d="M.5.5h12v12H.5z" strokeDasharray="1 1" />
          <circle cx="6.500" cy="5" r="3" />
          <path d="M9 8l4 4.500" strokeWidth="2" />
        </StatusIcon>
        <StatusIcon label="网格"><path d="M2.500 0v13M5.500 0v13M8.500 0v13M11.500 0v13M0 2.500h13M0 5.500h13M0 8.500h13M0 11.500h13" /></StatusIcon>
      </div>
      <svg width="10" height="10" viewBox="0 0 10 10" className="absolute bottom-1 right-[3px]" fill="#fff">
        <path d="M8 0h2v2H8zM8 4h2v2H8zM4 4h2v2H4zM8 8h2v2H8zM4 8h2v2H4zM0 8h2v2H0z" />
      </svg>
    </footer>
  );
}

export default function App() {
  return (
    <div className="flex h-screen -scale-x-100 flex-col overflow-hidden border border-b-0 border-[#274685] bg-white font-['Open_Sans','Noto_Sans_CJK_SC',sans-serif] text-xs">
      <TitleBar />
      <TabRow />
      <Ribbon />
      <div className="flex min-h-0 flex-1">
        <SymbolPanel />
        <Workspace />
        <ToolStrip />
      </div>
      <StatusBar />
    </div>
  );
}
